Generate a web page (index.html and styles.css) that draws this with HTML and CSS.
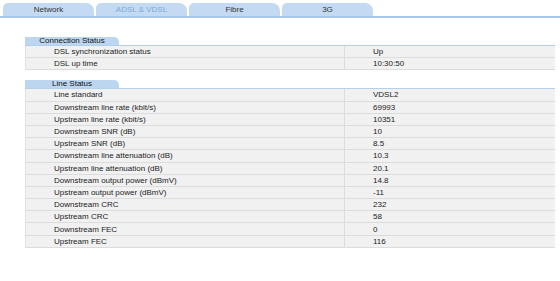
FILE: index.html
```html
<!DOCTYPE html>
<html>
<head>
    <meta charset="UTF-8">
    <title>DSL Status</title>
    <link rel="stylesheet" href="styles.css">
</head>
<body>
    <div class="tabs">
        <div class="tab">Network</div>
        <div class="tab active">ADSL &amp; VDSL</div>
        <div class="tab">Fibre</div>
        <div class="tab">3G</div>
    </div>

    <div class="content">
        <div class="section">
            <div class="section-head"><span class="section-title">Connection Status</span></div>
            <table class="status">
                <tr><td class="name">DSL synchronization status</td><td class="value">Up</td></tr>
                <tr><td class="name">DSL up time</td><td class="value">10:30:50</td></tr>
            </table>
        </div>

        <div class="section">
            <div class="section-head"><span class="section-title">Line Status</span></div>
            <table class="status">
                <tr><td class="name">Line standard</td><td class="value">VDSL2</td></tr>
                <tr><td class="name">Downstream line rate (kbit/s)</td><td class="value">69993</td></tr>
                <tr><td class="name">Upstream line rate (kbit/s)</td><td class="value">10351</td></tr>
                <tr><td class="name">Downstream SNR (dB)</td><td class="value">10</td></tr>
                <tr><td class="name">Upstream SNR (dB)</td><td class="value">8.5</td></tr>
                <tr><td class="name">Downstream line attenuation (dB)</td><td class="value">10.3</td></tr>
                <tr><td class="name">Upstream line attenuation (dB)</td><td class="value">20.1</td></tr>
                <tr><td class="name">Downstream output power (dBmV)</td><td class="value">14.8</td></tr>
                <tr><td class="name">Upstream output power (dBmV)</td><td class="value">-11</td></tr>
                <tr><td class="name">Downstream CRC</td><td class="value">232</td></tr>
                <tr><td class="name">Upstream CRC</td><td class="value">58</td></tr>
                <tr><td class="name">Downstream FEC</td><td class="value">0</td></tr>
                <tr><td class="name">Upstream FEC</td><td class="value">116</td></tr>
            </table>
        </div>
    </div>
</body>
</html>
```

FILE: styles.css
```css
body {
    margin: 0;
    background: #fff;
    font-family: "Liberation Sans", Arial, sans-serif;
    font-size: 8px;
    color: #222;
}
.tabs {
    display: flex;
    gap: 2px;
    padding: 3px 0 0 3px;
    border-bottom: 2px solid #a9c9ea;
}
.tab {
    width: 91px;
    height: 13px;
    line-height: 13px;
    text-align: center;
    background: #c3daf2;
    border-radius: 5px 8px 0 0;
    color: #333;
}
.tab.active {
    color: #7eaad6;
}
.content {
    padding: 19px 5px 0 25px;
}
.section {
    margin-bottom: 10px;
}
.section-head {
    border-bottom: 1px solid #b3cfec;
    height: 8px;
}
.section-title {
    display: block;
    width: 94px;
    height: 8px;
    line-height: 8px;
    text-align: center;
    background: #bdd6f0;
    border-radius: 0 5px 0 0;
    color: #111;
}
.status {
    width: 100%;
    border-collapse: collapse;
    background: #f1f1f1;
    border-left: 1px solid #e2e2e2;
}
.status td {
    height: 11.2px;
    line-height: 11px;
    padding: 0 0 0 28px;
    border-bottom: 1px solid #dcdcdc;
    white-space: nowrap;
}
.status td.name {
    width: 290px;
}
.status td.value {
    border-left: 1px solid #dcdcdc;
}
```
